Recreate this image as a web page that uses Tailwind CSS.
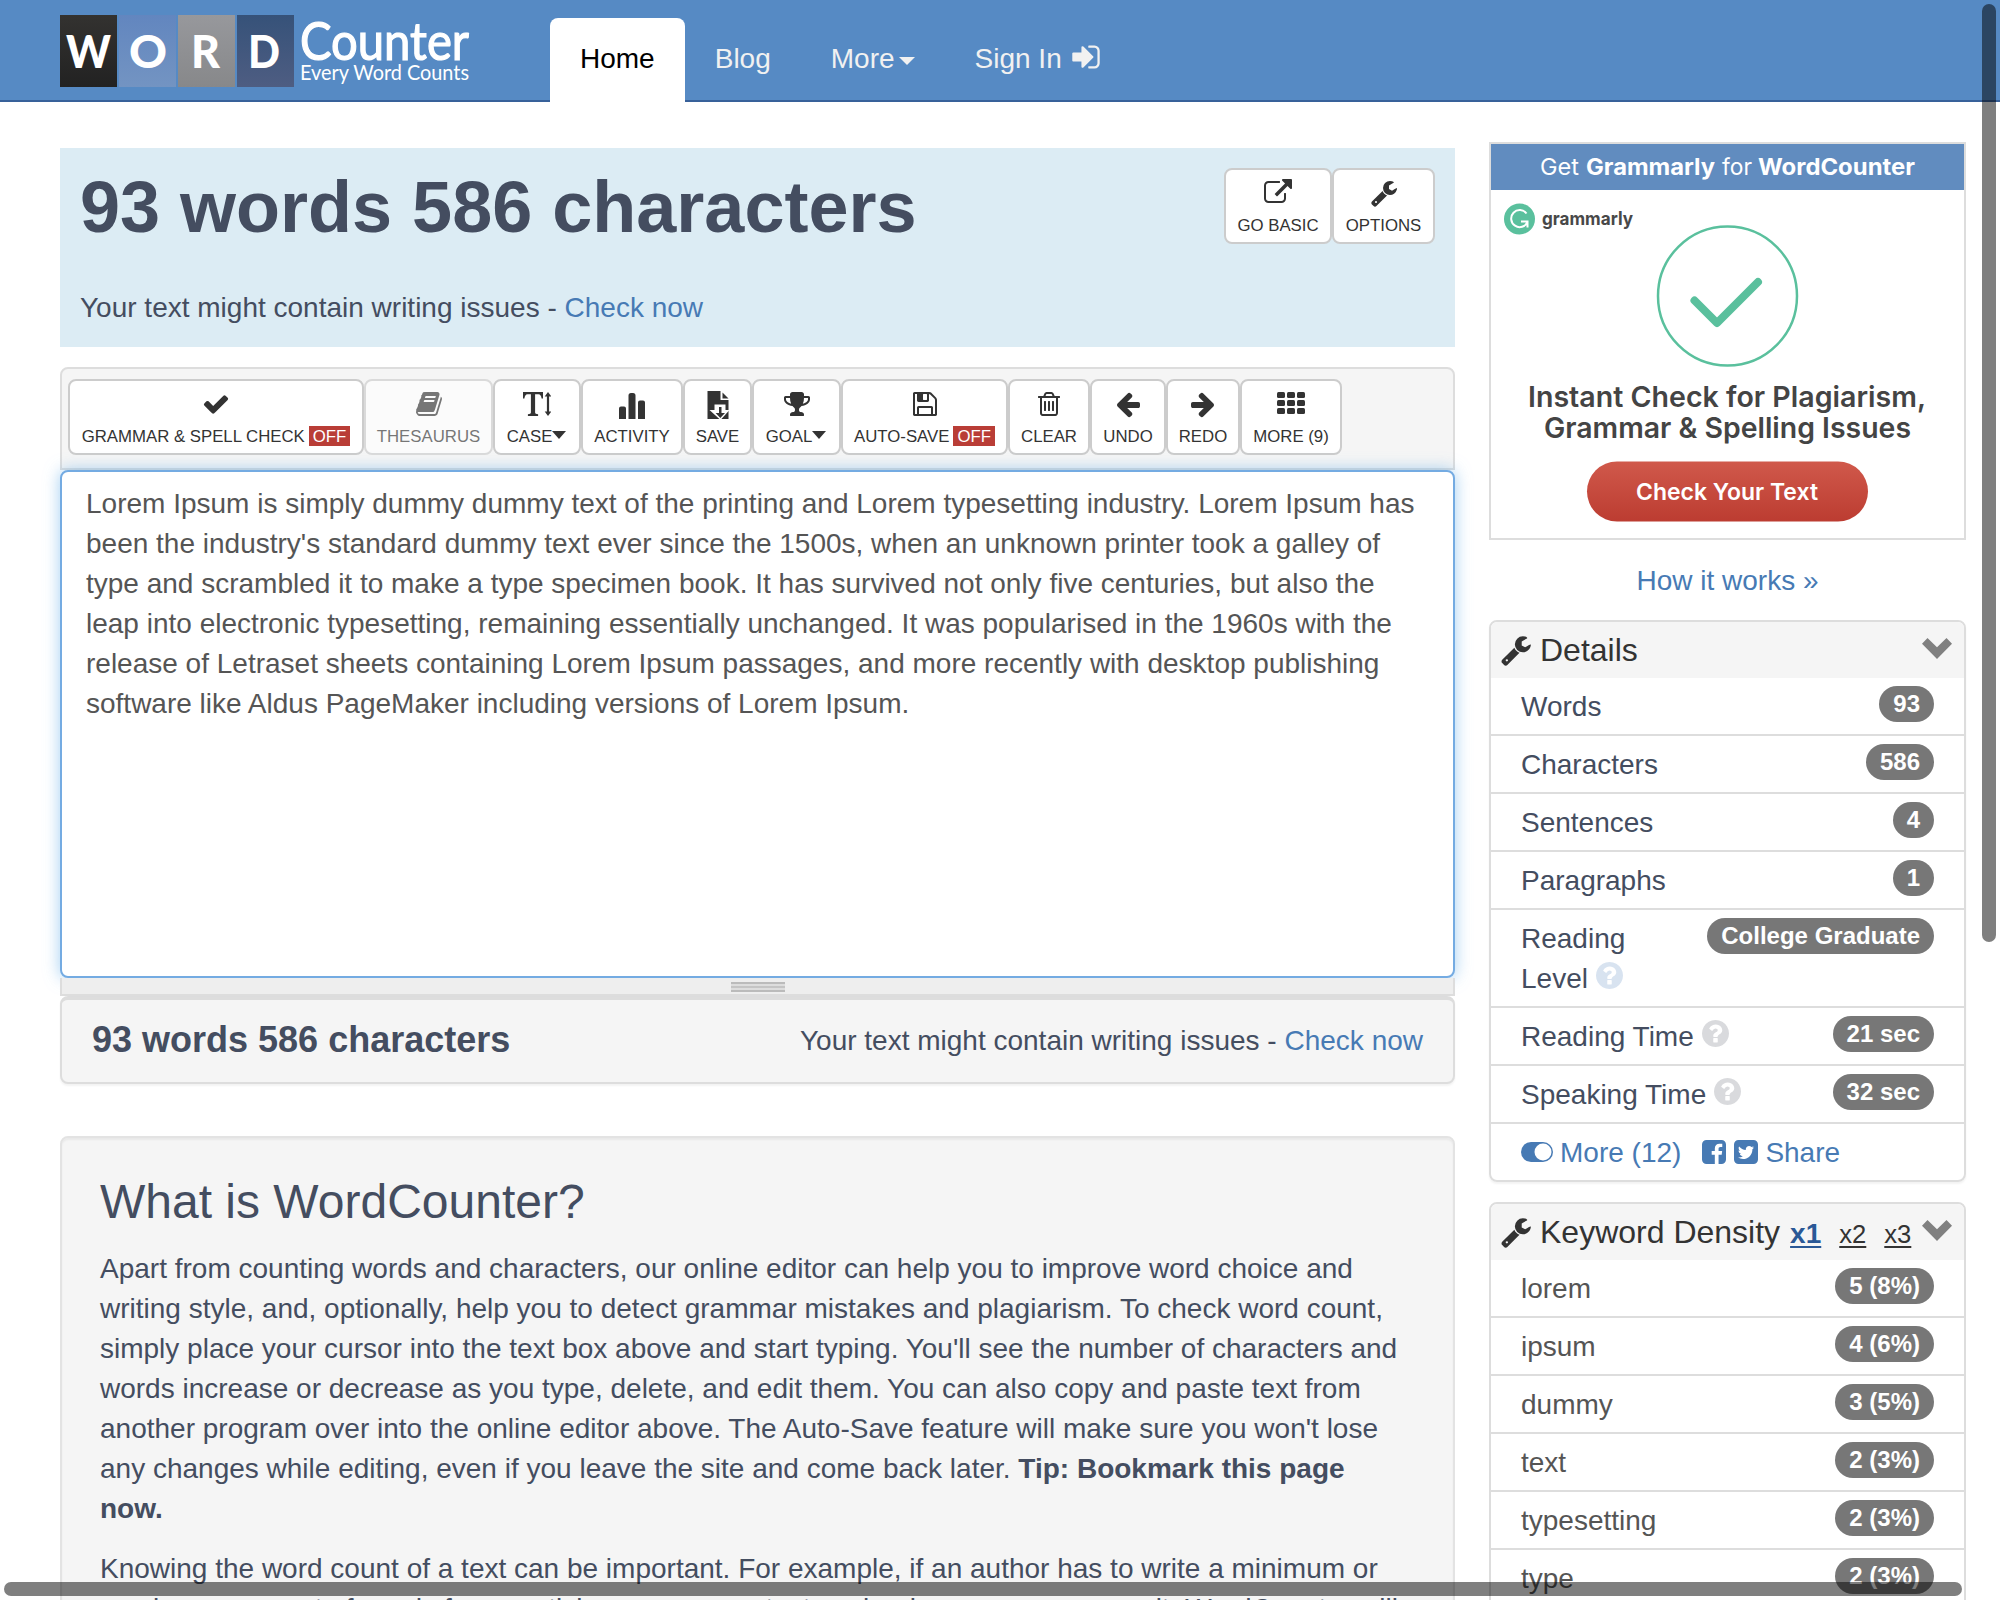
<!DOCTYPE html>
<html lang="en">
<head>
<meta charset="utf-8">
<title>WordCounter</title>
<script src="https://cdn.jsdelivr.net/npm/@tailwindcss/browser@4"></script>
</head>
<body class="relative h-[1600px] w-[2000px] overflow-hidden bg-white font-['Liberation_Sans',Arial,sans-serif] text-[28px] leading-[40px] text-[#444d60]">

<svg class="hidden">
  <symbol id="sign-in" viewBox="0 0 1792 1792"><path d="M1312 896q0 26-19 45l-544 544q-19 19-45 19t-45-19-19-45v-288h-448q-26 0-45-19t-19-45v-384q0-26 19-45t45-19h448v-288q0-26 19-45t45-19 45 19l544 544q19 19 19 45zm352-352v704q0 119-84.5 203.5t-203.5 84.5h-320q-13 0-22.5-9.5t-9.5-22.5q0-4-1-20t-.5-26.5 3-23.5 10-19.5 20.5-6.5h320q66 0 113-47t47-113v-704q0-66-47-113t-113-47h-312l-11.5-1-11.5-3-8-5.5-7-9-2-13.5q0-4-1-20t-.5-26.5 3-23.5 10-19.5 20.5-6.5h320q119 0 203.5 84.5t84.5 203.5z"/></symbol>
  <symbol id="external" viewBox="0 0 1792 1792"><path d="M1408 928v320q0 119-84.5 203.5t-203.5 84.5h-832q-119 0-203.5-84.5t-84.5-203.5v-832q0-119 84.5-203.5t203.5-84.5h704q14 0 23 9t9 23v64q0 14-9 23t-23 9h-704q-66 0-113 47t-47 113v832q0 66 47 113t113 47h832q66 0 113-47t47-113v-320q0-14 9-23t23-9h64q14 0 23 9t9 23zm384-864v512q0 26-19 45t-45 19-45-19l-176-176-652 652q-10 10-23 10t-23-10l-114-114q-10-10-10-23t10-23l652-652-176-176q-19-19-19-45t19-45 45-19h512q26 0 45 19t19 45z"/></symbol>
  <symbol id="wrench" viewBox="0 0 1792 1792"><path d="M448 1472q0-26-19-45t-45-19-45 19-19 45 19 45 45 19 45-19 19-45zm644-420l-682 682q-37 37-90 37-52 0-91-37l-106-108q-38-36-38-90 0-53 38-91l681-681q39 98 114.5 173.5t173.5 114.5zm634-435q0 39-23 106-47 134-164.5 217.5t-258.5 83.5q-185 0-316.5-131.5t-131.5-316.5 131.5-316.5 316.5-131.5q58 0 121.5 16.5t107.5 46.5q16 11 16 28t-16 28l-293 169v224l193 107q5-3 79-48.5t135.5-81 70.5-35.5q15 0 23.5 10t8.5 25z"/></symbol>
  <symbol id="check" viewBox="0 0 1792 1792"><path d="M1671 566q0 40-28 68l-724 724-136 136q-28 28-68 28t-68-28l-136-136-362-362q-28-28-28-68t28-68l136-136q28-28 68-28t68 28l294 295 656-657q28-28 68-28t68 28l136 136q28 28 28 68z"/></symbol>
  <symbol id="book" viewBox="0 0 1792 1792"><path d="M1703 478q40 57 18 129l-275 906q-19 64-76.5 107.5t-122.5 43.5h-923q-77 0-148.5-53.5t-99.5-131.5q-24-67-2-127 0-4 3-27t4-37q1-8-3-21.5t-3-19.5q2-11 8-21t16.5-23.5 16.5-23.5q23-38 45-91.5t30-91.5q3-10 .5-30t-.5-28q3-11 17-28t17-23q21-36 42-92t25-90q1-9-2.5-32t.5-28q4-13 22-30.5t22-22.5q19-26 42.5-84.5t27.5-96.5q1-8-3-25.5t-2-26.5q2-8 9-18t18-23 17-21q8-12 16.5-30.5t15-35 16-36 19.5-32 26.5-23.5 36-11.5 47.5 5.5l-1 3q38-9 51-9h761q74 0 114 56t18 130l-274 906q-36 119-71.5 153.5t-128.5 34.5h-869q-27 0-38 15-11 16-1 43 24 70 144 70h923q29 0 56-15.5t35-41.5l300-987q7-22 5-57 38 15 59 43zm-1064 2q-4 13 2 22.5t20 9.5h608q13 0 25.5-9.5t16.5-22.5l21-64q4-13-2-22.5t-20-9.5h-608q-13 0-25.5 9.5t-16.5 22.5zm-83 256q-4 13 2 22.5t20 9.5h608q13 0 25.5-9.5t16.5-22.5l21-64q4-13-2-22.5t-20-9.5h-608q-13 0-25.5 9.5t-16.5 22.5z"/></symbol>
  <symbol id="text-height" viewBox="0 0 28 28"><path d="M0 2h20v6.500h-1.400c-.4-2.700-1.200-4.300-3.200-4.300h-3.300v18.300c0 1.300 1.200 1.500 3 1.800v1.700h-10.200v-1.700c1.800-.3 3-.5 3-1.800v-18.300h-3.300c-2 0-2.800 1.600-3.200 4.300h-1.400z"/><path d="M25 2l3.300 4.500h-2.200v15h2.200l-3.300 4.500-3.300-4.500h2.200v-15h-2.200z"/></symbol>
  <symbol id="bars" viewBox="0 0 28 30"><path d="M1 29v-10.500a2 2 0 0 1 2-2h3a2 2 0 0 1 2 2v10.500zM10.500 29v-23.500a2.500 2.500 0 0 1 2.500-2.500h2a2.500 2.500 0 0 1 2.500 2.500v23.500zM20 29v-16.500a2 2 0 0 1 2-2h3a2 2 0 0 1 2 2v16.500z"/></symbol>
  <symbol id="save-file" viewBox="0 0 28 30"><path d="M3.500 1h13v9h8v19h-21z"/><path d="M18.500 2.500l6 6h-6z"/><path d="M10.500 14.500h11v5.500h4l-9 10-11-10h5z" fill="#fff"/><path d="M15 17h2.500v6h3.500l-4.700 5-4.700-5h3.400z"/></symbol>
  <symbol id="trophy" viewBox="0 0 1792 1792"><path d="M522 883q-74-162-74-371h-256v96q0 78 94.500 162t235.500 113zm1078-275v-96h-256q0 209-74 371 141-29 235.500-113t94.500-162zm128-128v128q0 71-41.500 143t-112 130-173 97.500-215.500 44.500q-42 54-95 95-38 34-52.500 72.500t-14.500 89.500q0 54 30.500 91t97.500 37q75 0 133.500 45.500t58.500 114.500v64q0 14-9 23t-23 9h-832q-14 0-23-9t-9-23v-64q0-69 58.500-114.500t133.500-45.500q67 0 97.500-37t30.500-91q0-51-14.500-89.500t-52.500-72.500q-53-41-95-95-113-5-215.500-44.500t-173-97.500-112-130-41.500-143v-128q0-40 28-68t68-28h288v-96q0-66 47-113t113-47h576q66 0 113 47t47 113v96h288q40 0 68 28t28 68z"/></symbol>
  <symbol id="floppy" viewBox="0 0 1792 1792"><path d="M512 1536h768v-384h-768v384zm896 0h128v-896q0-14-10-38.500t-20-34.500l-281-281q-10-10-34-20t-39-10v416q0 40-28 68t-68 28h-576q-40 0-68-28t-28-68v-416h-128v1280h128v-416q0-40 28-68t68-28h832q40 0 68 28t28 68v416zm-384-928v-320q0-13-9.500-22.500t-22.500-9.500h-192q-13 0-22.500 9.500t-9.500 22.500v320q0 13 9.500 22.500t22.500 9.500h192q13 0 22.500-9.500t9.500-22.500zm640 32v928q0 40-28 68t-68 28h-1344q-40 0-68-28t-28-68v-1344q0-40 28-68t68-28h928q40 0 88 20t76 48l280 280q28 28 48 76t20 88z"/></symbol>
  <symbol id="trash" viewBox="0 0 1792 1792"><path d="M704 736v576q0 14-9 23t-23 9h-64q-14 0-23-9t-9-23v-576q0-14 9-23t23-9h64q14 0 23 9t9 23zm256 0v576q0 14-9 23t-23 9h-64q-14 0-23-9t-9-23v-576q0-14 9-23t23-9h64q14 0 23 9t9 23zm256 0v576q0 14-9 23t-23 9h-64q-14 0-23-9t-9-23v-576q0-14 9-23t23-9h64q14 0 23 9t9 23zm128 724v-948h-896v948q0 22 7 40.500t14.500 27 10.500 8.500h832q3 0 10.500-8.500t14.500-27 7-40.500zm-672-1076h448l-48-117q-7-9-17-11h-317q-10 2-17 11zm928 32v64q0 14-9 23t-23 9h-96v948q0 83-47 143.500t-113 60.500h-832q-66 0-113-58.500t-47-141.500v-952h-96q-14 0-23-9t-9-23v-64q0-14 9-23t23-9h309l70-167q15-37 54-63t79-26h320q40 0 79 26t54 63l70 167h309q14 0 23 9t9 23z"/></symbol>
  <symbol id="arrow" viewBox="0 0 1792 1792"><path d="M1664 896v128q0 53-32.500 90.500t-84.500 37.500h-704l293 294q38 36 38 90t-38 90l-75 76q-37 37-90 37-52 0-91-37l-651-652q-37-37-37-90 0-52 37-91l651-650q38-38 91-38 52 0 90 38l75 74q38 38 38 91t-38 91l-293 293h704q52 0 84.500 37.500t32.500 90.500z"/></symbol>
  <symbol id="grid" viewBox="0 0 28 28"><g><rect x="0" y="2" width="8" height="6" rx="1.500"/><rect x="10" y="2" width="8" height="6" rx="1.500"/><rect x="20" y="2" width="8" height="6" rx="1.500"/><rect x="0" y="10" width="8" height="6" rx="1.500"/><rect x="10" y="10" width="8" height="6" rx="1.500"/><rect x="20" y="10" width="8" height="6" rx="1.500"/><rect x="0" y="18" width="8" height="6" rx="1.500"/><rect x="10" y="18" width="8" height="6" rx="1.500"/><rect x="20" y="18" width="8" height="6" rx="1.500"/></g></symbol>
  <symbol id="help" viewBox="128 128 1536 1536"><path d="M1024 1376v-192q0-14-9-23t-23-9h-192q-14 0-23 9t-9 23v192q0 14 9 23t23 9h192q14 0 23-9t9-23zm256-672q0-88-55.500-163t-138.500-116-170-41q-243 0-371 213-15 24 8 42l132 100q7 6 19 6 16 0 25-12 53-68 86-92 34-24 86-24 48 0 85.500 26t37.500 59q0 38-20 61t-68 45q-63 28-115.500 86.500t-52.500 125.500v36q0 14 9 23t23 9h192q14 0 23-9t9-23q0-19 21.500-49.500t54.500-49.500q32-18 49-28.500t46-35 44.500-48 28-60.500 12.500-81zm384 192q0 209-103 385.500t-279.500 279.500-385.500 103-385.500-103-279.500-279.500-103-385.500 103-385.500 279.500-279.500 385.500-103 385.500 103 279.500 279.500 103 385.500z"/></symbol>
  <symbol id="facebook" viewBox="128 128 1536 1536"><path d="M1376 128q119 0 203.500 84.500t84.500 203.500v960q0 119-84.500 203.500t-203.500 84.500h-188v-595h199l30-232h-229v-148q0-56 23.500-84t91.500-28l122-1v-207q-63-9-178-9-136 0-217.500 80t-81.500 226v171h-200v232h200v595h-532q-119 0-203.500-84.500t-84.500-203.500v-960q0-119 84.500-203.500t203.500-84.500h960z"/></symbol>
  <symbol id="twitter" viewBox="128 128 1536 1536"><path d="M1408 610q-56 25-121 34 68-40 93-117-65 38-134 51-61-66-153-66-87 0-148.500 61.500t-61.500 148.500q0 29 5 48-129-7-242-65t-192-155q-29 50-29 106 0 114 91 175-47-1-100-26v2q0 75 50 133.500t123 72.500q-29 8-51 8-13 0-39-4 21 63 74.500 104t121.500 42q-116 90-261 90-26 0-50-3 148 94 322 94 112 0 210-35.500t168-95 120.500-137 75-162 24.500-168.500q0-18-1-27 63-45 105-109zm256-194v960q0 119-84.500 203.500t-203.500 84.500h-960q-119 0-203.500-84.500t-84.500-203.500v-960q0-119 84.500-203.500t203.500-84.500h960q119 0 203.500 84.500t84.500 203.500z"/></symbol>
  <symbol id="chevron" viewBox="0 0 30 21"><path d="M0 5.700L5.500 0L15 9.300L24.500 0L30 5.700L15 21z"/></symbol>
</svg>

<header class="flex h-[102px] border-b-2 border-[#38619a] bg-[#568ac4] pl-[60px]">
  <svg class="mt-[15px] h-[75px] w-[430px] shrink-0 overflow-visible fill-white font-['Lato',sans-serif]" viewBox="0 0 430 75">
    <defs>
      <linearGradient id="t1" x2="0" y2="1"><stop stop-color="#333230"/><stop offset="1" stop-color="#222"/></linearGradient>
      <linearGradient id="t2" x2="0" y2="1"><stop stop-color="#6286bf"/><stop offset="1" stop-color="#7394c2"/></linearGradient>
      <linearGradient id="t3" x2="0" y2="1"><stop stop-color="#97989c"/><stop offset="1" stop-color="#87888a"/></linearGradient>
      <linearGradient id="t4" x2="0" y2="1"><stop stop-color="#365279"/><stop offset="1" stop-color="#4e5d82"/></linearGradient>
    </defs>
    <rect width="57" height="72" fill="url(#t1)"/>
    <rect x="59" width="57" height="72" fill="url(#t2)"/>
    <rect x="118" width="57" height="72" fill="url(#t3)"/>
    <rect x="177" width="57" height="72" fill="url(#t4)"/>
    <g font-weight="900" font-size="46">
      <text x="6" y="53" textLength="45" lengthAdjust="spacingAndGlyphs">W</text>
      <text x="69" y="53" textLength="38" lengthAdjust="spacingAndGlyphs">O</text>
      <text x="131" y="53" textLength="29" lengthAdjust="spacingAndGlyphs">R</text>
      <text x="188" y="53" textLength="32" lengthAdjust="spacingAndGlyphs">D</text>
    </g>
    <text x="240" y="44.500" font-size="52" font-weight="400" stroke="#fff" stroke-width="1.200" textLength="169" lengthAdjust="spacingAndGlyphs">Counter</text>
    <text x="240" y="65" font-size="22" textLength="169" lengthAdjust="spacingAndGlyphs">Every Word Counts</text>
  </svg>
  <nav class="ml-[60px] mt-[18px] flex h-[84px] text-[#f1f1f1]">
    <a class="rounded-t-lg bg-white px-[30px] pt-[21px] text-black">Home</a>
    <a class="px-[30px] pt-[21px]">Blog</a>
    <a class="flex px-[30px] pt-[21px]">More<span class="ml-1 mt-[18px] h-0 w-0 border-x-8 border-t-8 border-x-transparent"></span></a>
    <a class="flex gap-[8px] px-[30px] pt-[21px]">Sign In<svg class="mt-[2px] size-[32px] fill-current"><use href="#sign-in"/></svg></a>
  </nav>
</header>

<main class="flex h-[1498px] gap-[34px] overflow-hidden pl-[60px]">
  <div class="w-[1395px] shrink-0 pt-[46px]">
    <section class="flex h-[199px] justify-between bg-[#dcecf4] px-5 pt-5">
      <div>
        <h1 class="-mt-px whitespace-nowrap text-[72px] font-bold leading-[80px]">93 words 586 characters</h1>
        <p class="mt-[41px]">Your text might contain writing issues - <a class="text-[#477ab4]">Check now</a></p>
      </div>
      <div class="flex text-[16.800px] leading-6 text-[#333]">
        <div class="flex h-[76px] w-[108px] flex-col items-center gap-[7px] rounded-lg border-2 border-[#ccc] bg-white pt-[9px]"><svg class="size-7 shrink-0 fill-current"><use href="#external"/></svg>GO BASIC</div>
        <div class="flex h-[76px] w-[103px] flex-col items-center gap-[7px] rounded-lg border-2 border-[#ccc] bg-white pt-[9px]"><svg class="size-7 shrink-0 fill-current"><use href="#wrench"/></svg>OPTIONS</div>
      </div>
    </section>

    <section class="mt-5 flex h-[103px] rounded-t-lg border-2 border-[#ddd] bg-[#f5f5f5] pl-[6px] pt-[10px] text-[16.800px] leading-6 text-[#333] *:flex *:h-[76px] *:shrink-0 *:flex-col *:items-center *:gap-[7px] *:whitespace-nowrap *:rounded-lg *:border-2 *:border-[#ccc] *:bg-white *:pt-[9px]">
      <div class="w-[296px]"><svg class="size-7 shrink-0 fill-current"><use href="#check"/></svg><div class="flex items-start gap-1">GRAMMAR &amp; SPELL CHECK<span class="mt-px h-5 bg-[#b93d36] px-1 leading-[22px] text-white">OFF</span></div></div>
      <div class="w-[129px] opacity-65"><svg class="size-7 shrink-0 fill-current"><use href="#book"/></svg>THESAURUS</div>
      <div class="w-[88px]"><svg class="size-7 shrink-0 fill-current"><use href="#text-height"/></svg><div class="-ml-px flex">CASE<span class="mt-[6px] h-0 w-0 border-x-[7.500px] border-t-8 border-x-transparent"></span></div></div>
      <div class="w-[102px]"><svg class="-mb-0.5 h-[30px] w-7 shrink-0 fill-current"><use href="#bars"/></svg>ACTIVITY</div>
      <div class="w-[69px]"><svg class="-mb-0.5 h-[30px] w-7 shrink-0 fill-current"><use href="#save-file"/></svg>SAVE</div>
      <div class="w-[89px]"><svg class="size-7 shrink-0 fill-current"><use href="#trophy"/></svg><div class="-ml-px flex">GOAL<span class="mt-[6px] h-0 w-0 border-x-[7.500px] border-t-8 border-x-transparent"></span></div></div>
      <div class="w-[167px]"><svg class="size-7 shrink-0 fill-current"><use href="#floppy"/></svg><div class="flex items-start gap-1">AUTO-SAVE<span class="mt-px h-5 bg-[#b93d36] px-1 leading-[22px] text-white">OFF</span></div></div>
      <div class="w-[82px]"><svg class="size-7 shrink-0 fill-current"><use href="#trash"/></svg>CLEAR</div>
      <div class="w-[76px]"><svg class="size-7 shrink-0 fill-current"><use href="#arrow"/></svg>UNDO</div>
      <div class="w-[74px]"><svg class="size-7 shrink-0 -scale-x-100 fill-current"><use href="#arrow"/></svg>REDO</div>
      <div class="w-[102px]"><svg class="size-7 shrink-0 fill-current"><use href="#grid"/></svg>MORE (9)</div>
    </section>

    <section class="relative h-[508px] whitespace-nowrap rounded-lg border-2 border-[#74abe2] bg-white pl-6 pt-[12px] text-[#555] shadow-[0_0_16px_rgba(102,175,233,0.6)]">
      Lorem Ipsum is simply dummy dummy text of the printing and Lorem typesetting industry. Lorem Ipsum has<br>been the industry's standard dummy text ever since the 1500s, when an unknown printer took a galley of<br>type and scrambled it to make a type specimen book. It has survived not only five centuries, but also the<br>leap into electronic typesetting, remaining essentially unchanged. It was popularised in the 1960s with the<br>release of Letraset sheets containing Lorem Ipsum passages, and more recently with desktop publishing<br>software like Aldus PageMaker including versions of Lorem Ipsum.
    </section>
    <div class="relative flex h-[18px] justify-center border-2 border-t-0 border-[#ddd] bg-[#eee] pt-1">
      <div class="flex h-[10px] w-[54px] flex-col justify-between border-y-2 border-[#bbb] bg-[#ddd] py-[2px]"><div class="h-[2px] bg-[#c4c4c4]"></div></div>
    </div>
    <section class="flex h-[88px] justify-between rounded-lg border-2 border-t-4 border-[#ddd] bg-[#f5f5f5] pl-[30px] pr-[30px] shadow-[0_2px_2px_rgba(0,0,0,0.05)]">
      <div class="pt-[20px] text-[36px] font-bold">93 words 586 characters</div>
      <div class="pt-[21px]">Your text might contain writing issues - <a class="text-[#477ab4]">Check now</a></div>
    </section>

    <section class="mt-[52px] h-[600px] whitespace-nowrap rounded-lg border-2 border-[#e3e3e3] bg-[#f5f5f5] pl-[38px] pt-[38px] shadow-[inset_0_2px_2px_rgba(0,0,0,0.05)]">
      <h2 class="text-[48px] leading-[52px]">What is WordCounter?</h2>
      <p class="mt-[21px]">Apart from counting words and characters, our online editor can help you to improve word choice and<br>writing style, and, optionally, help you to detect grammar mistakes and plagiarism. To check word count,<br>simply place your cursor into the text box above and start typing. You'll see the number of characters and<br>words increase or decrease as you type, delete, and edit them. You can also copy and paste text from<br>another program over into the online editor above. The Auto-Save feature will make sure you won't lose<br>any changes while editing, even if you leave the site and come back later. <b>Tip: Bookmark this page<br>now.</b></p>
      <p class="mt-5">Knowing the word count of a text can be important. For example, if an author has to write a minimum or<br>maximum amount of words for an article, essay, report, story, book, paper, you name it. WordCounter will</p>
    </section>
  </div>

  <aside class="w-[477px] shrink-0 pt-[40px]">
    <section class="h-[398px] border-2 border-[#ddd]">
      <svg class="block h-[394px] w-[473px] font-['Inter',sans-serif]" viewBox="1491 144 473 394">
        <defs><linearGradient id="red" x2="0" y2="1"><stop stop-color="#d0594b"/><stop offset="1" stop-color="#bc3c31"/></linearGradient></defs>
        <rect x="1491" y="144" width="473" height="46" fill="#618cbf"/>
        <g fill="#fff" font-size="22.500">
          <text x="1540" y="174.500" textLength="39" lengthAdjust="spacingAndGlyphs">Get</text>
          <text x="1586" y="174.500" font-weight="700" textLength="129" lengthAdjust="spacingAndGlyphs">Grammarly</text>
          <text x="1722" y="174.500" textLength="30" lengthAdjust="spacingAndGlyphs">for</text>
          <text x="1758" y="174.500" font-weight="700" textLength="157" lengthAdjust="spacingAndGlyphs">WordCounter</text>
          <rect x="1587" y="461.500" width="281" height="60" rx="30" fill="url(#red)"/>
          <text x="1636" y="500" font-weight="600" textLength="182" lengthAdjust="spacingAndGlyphs">Check Your Text</text>
        </g>
        <circle cx="1519.500" cy="219" r="15.500" fill="#5ac09d"/>
        <path d="M1526.500 213.500a8.500 8.500 0 1 0 1 8.500M1521 221.500h6.500v6" fill="none" stroke="#fff" stroke-width="2"/>
        <text x="1542" y="224.500" fill="#484848" font-size="18.500" font-weight="700" textLength="91" lengthAdjust="spacingAndGlyphs">grammarly</text>
        <circle cx="1727.500" cy="296" r="69.500" fill="none" stroke="#5ac09d" stroke-width="2.500"/>
        <path d="M1694.500 300.500l22.500 22.500 41-41" fill="none" stroke="#5ac09d" stroke-width="8" stroke-linecap="round" stroke-linejoin="round"/>
        <g fill="#444" font-size="28.500" font-weight="600">
          <text x="1528" y="406.500" textLength="398" lengthAdjust="spacingAndGlyphs">Instant Check for Plagiarism,</text>
          <text x="1544" y="437.500" textLength="367" lengthAdjust="spacingAndGlyphs">Grammar &amp; Spelling Issues</text>
        </g>
      </svg>
    </section>
    <p class="mt-[21px] text-center text-[#477ab4]">How it works »</p>

    <section class="mt-[19px] h-[562px] rounded-lg border-2 border-[#ddd] shadow-[0_2px_2px_rgba(0,0,0,0.05)]">
      <div class="flex h-14 rounded-t-md bg-[#f5f5f5] pl-[9px] pr-3 text-[32px] text-[#333]">
        <svg class="mt-[12px] size-8 fill-current"><use href="#wrench"/></svg><span class="ml-[8px] mt-[8px]">Details</span>
        <svg class="ml-auto mt-4 h-[21px] w-[30px] fill-[#808080]"><use href="#chevron"/></svg>
      </div>
      <ul class="*:flex *:items-start *:justify-between *:border-b-2 *:border-[#ddd] *:pb-[7px] *:pl-[30px] *:pr-[30px] *:pt-[9px] [&_b]:-mt-px [&_b]:h-9 [&_b]:rounded-[20px] [&_b]:bg-[#777] [&_b]:px-[14px] [&_b]:text-[24px] [&_b]:leading-[35px] [&_b]:text-white">
        <li>Words<b>93</b></li>
        <li>Characters<b>586</b></li>
        <li>Sentences<b>4</b></li>
        <li>Paragraphs<b>1</b></li>
        <li><span>Reading<br><span class="flex gap-2">Level<svg class="mt-[3px] size-[27px] fill-[#d8e3f0]"><use href="#help"/></svg></span></span><b>College Graduate</b></li>
        <li><span class="flex gap-2">Reading Time<svg class="mt-[3px] size-[27px] fill-[#d9dadd]"><use href="#help"/></svg></span><b>21 sec</b></li>
        <li><span class="flex gap-2">Speaking Time<svg class="mt-[3px] size-[27px] fill-[#d9dadd]"><use href="#help"/></svg></span><b>32 sec</b></li>
      </ul>
      <div class="flex items-start pl-[30px] pt-[9px] text-[#477ab4]">
        <svg class="mt-[9px] h-5 w-8" viewBox="0 0 32 20"><rect width="32" height="20" rx="10" class="fill-current"/><circle cx="22" cy="10" r="8.500" fill="#fff"/></svg>
        <span class="ml-[7px]">More (12)</span>
        <svg class="ml-[21px] mt-[7px] size-6 fill-current"><use href="#facebook"/></svg>
        <svg class="ml-2 mt-[7px] size-6 fill-current"><use href="#twitter"/></svg>
        <span class="ml-[7px]">Share</span>
      </div>
    </section>

    <section class="mt-5 h-[500px] rounded-lg border-2 border-[#ddd]">
      <div class="flex h-14 rounded-t-md bg-[#f5f5f5] pl-[9px] pr-3 text-[32px] text-[#333]">
        <svg class="mt-[12px] size-8 fill-current"><use href="#wrench"/></svg><span class="ml-[8px] mt-[8px] whitespace-nowrap">Keyword Density</span>
        <span class="ml-[10px] mt-[10px] text-[28px] font-bold text-[#2a5896] underline decoration-2 underline-offset-[3px]">x1</span>
        <span class="ml-[18px] mt-[10px] text-[25.600px] underline decoration-2 underline-offset-[3px]">x2</span>
        <span class="ml-[18px] mt-[10px] text-[25.600px] underline decoration-2 underline-offset-[3px]">x3</span>
        <svg class="ml-auto mt-4 h-[21px] w-[30px] shrink-0 fill-[#808080]"><use href="#chevron"/></svg>
      </div>
      <ul class="text-[#555] *:flex *:items-start *:justify-between *:border-b-2 *:border-[#ddd] *:pb-[7px] *:pl-[30px] *:pr-[30px] *:pt-[9px] [&_b]:-mt-px [&_b]:h-9 [&_b]:rounded-[20px] [&_b]:bg-[#777] [&_b]:px-[14px] [&_b]:text-[24px] [&_b]:leading-[35px] [&_b]:text-white">
        <li>lorem<b>5 (8%)</b></li>
        <li>ipsum<b>4 (6%)</b></li>
        <li>dummy<b>3 (5%)</b></li>
        <li>text<b>2 (3%)</b></li>
        <li>typesetting<b>2 (3%)</b></li>
        <li>type<b>2 (3%)</b></li>
      </ul>
    </section>
  </aside>
</main>

<!-- overlay scrollbars -->
<div class="absolute right-1 top-1 h-[938px] w-[14px] rounded-full bg-black/50"></div>
<div class="absolute left-1 top-[1582px] h-[14px] w-[1958px] rounded-full bg-black/50"></div>
</body>
</html>
